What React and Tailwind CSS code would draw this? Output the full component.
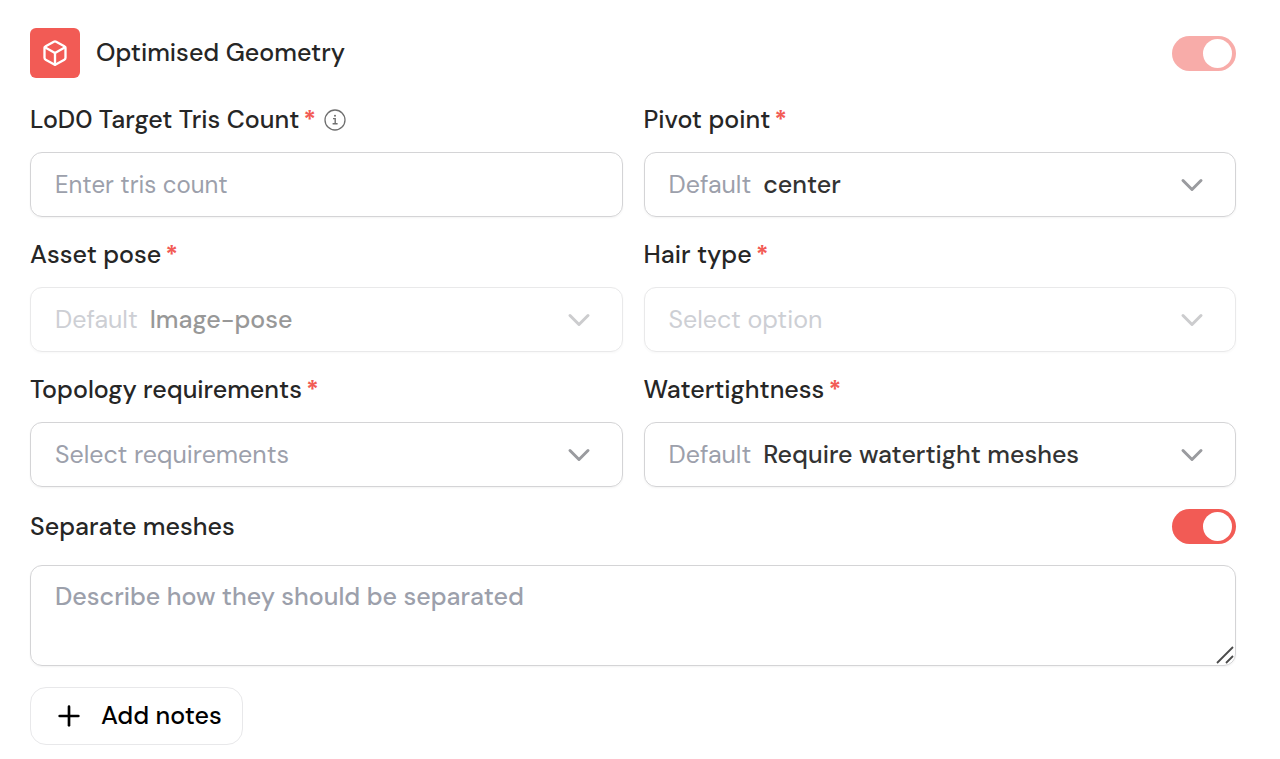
// Settings form for the optimised geometry step.
import { useState } from "react";
import { Box, ChevronDown, Plus } from "lucide-react";
import clsx from "clsx";

function InfoIcon() {
  return (
    <svg className="size-[22px] text-[#6f6f6f]" viewBox="0 0 22 22" fill="none" stroke="currentColor" aria-hidden="true">
      <circle cx="11" cy="11" r="10" strokeWidth="1.3" />
      <path d="M9 9.6h2.2v5M8.6 14.8h5" strokeWidth="1.4" />
      <circle cx="11" cy="6.8" r="1" fill="currentColor" stroke="none" />
    </svg>
  );
}

function Toggle({ id, label, defaultChecked, disabled }) {
  return (
    <input
      id={id}
      type="checkbox"
      role="switch"
      aria-label={label}
      defaultChecked={defaultChecked}
      disabled={disabled}
      className="flex h-[35px] w-16 shrink-0 appearance-none items-center rounded-full bg-gray-300 px-1 before:size-[29px] before:rounded-full before:bg-white checked:justify-end checked:bg-[#f25b55] disabled:opacity-50"
    />
  );
}

function Label({ htmlFor, children, info }) {
  return (
    <div className="flex h-8 items-center gap-2">
      <label htmlFor={htmlFor} className="flex gap-1 font-medium">
        {children}
        <span className="font-bold text-[#f25b55]">*</span>
      </label>
      {info && (
        <button type="button" aria-label="More information">
          <InfoIcon />
        </button>
      )}
    </div>
  );
}

function SelectField({ id, label, options, placeholder, disabled }) {
  const [value, setValue] = useState(placeholder ? "" : options[0]);

  return (
    <div className="flex flex-col gap-4">
      <Label htmlFor={id}>{label}</Label>
      <div
        className={clsx(
          "relative flex h-[65px] items-center gap-3 rounded-xl border border-[#d4d4d6] pl-6 shadow-xs",
          disabled && "opacity-50"
        )}
      >
        {!placeholder && <span className="text-[#9ca0ab]">Default</span>}
        <select
          id={id}
          value={value}
          onChange={(e) => setValue(e.target.value)}
          disabled={disabled}
          className={clsx(
            "h-full min-w-0 flex-1 appearance-none rounded-xl bg-transparent pr-16 opacity-100 outline-none",
            value ? "font-medium text-[#333333]" : "text-[#9ca0ab]"
          )}
        >
          {placeholder && <option value="">{placeholder}</option>}
          {options.map((o) => (
            <option key={o} value={o}>
              {o}
            </option>
          ))}
        </select>
        <ChevronDown className="pointer-events-none absolute right-[25px] size-9 text-[#9a9b9f]" strokeWidth={2} />
      </div>
    </div>
  );
}

export default function App() {
  return (
    <form className="bg-white pt-7 pr-11 pb-3.5 pl-[30px] font-['DM_Sans','Inter',sans-serif] text-[25px] leading-8 text-[#262626]">
      <div className="flex items-center gap-4">
        <div className="flex size-[50px] items-center justify-center rounded-md bg-[#f25b55]">
          <Box className="size-7 text-white" strokeWidth={2} />
        </div>
        <h2 className="flex-1 font-medium">Optimised Geometry</h2>
        <Toggle label="Optimised Geometry" defaultChecked disabled />
      </div>

      <div className="mt-[26px] grid grid-cols-2 gap-x-[21px] gap-y-[22px]">
        <div className="flex flex-col gap-4">
          <Label htmlFor="tris" info>
            LoD0 Target Tris Count
          </Label>
          <input
            id="tris"
            type="text"
            placeholder="Enter tris count"
            className="h-[65px] w-full rounded-xl border border-[#d4d4d6] px-6 text-2xl shadow-xs outline-none placeholder:text-[#9ca0ab]"
          />
        </div>
        <SelectField id="pivot" label="Pivot point" options={["center", "bottom"]} />
        <SelectField id="pose" label="Asset pose" options={["Image-pose", "A-pose", "T-pose"]} disabled />
        <SelectField id="hair" label="Hair type" placeholder="Select option" options={["Cards", "Mesh"]} disabled />
        <SelectField
          id="topology"
          label="Topology requirements"
          placeholder="Select requirements"
          options={["Quads", "Triangles"]}
        />
        <SelectField id="watertight" label="Watertightness" options={["Require watertight meshes", "Not required"]} />
      </div>

      <div className="mt-[22px] flex items-center justify-between">
        <label htmlFor="separate" className="font-medium">
          Separate meshes
        </label>
        <Toggle id="separate" label="Separate meshes" defaultChecked />
      </div>

      <div className="relative mt-[21px]">
        <textarea
          aria-label="Describe how they should be separated"
          placeholder="Describe how they should be separated"
          className="block h-[101px] w-full resize-none rounded-xl border border-[#d4d4d6] px-6 py-[15px] font-medium shadow-xs outline-none placeholder:text-[#9ca0ab]"
        />
        <svg
          className="pointer-events-none absolute right-0.5 bottom-0.5 size-[18px] text-[#4b4b4b]"
          viewBox="0 0 18 18"
          fill="none"
          stroke="currentColor"
          strokeWidth="1.8"
          aria-hidden="true"
        >
          <path d="M1 17 17 1M10 17l7-7" />
        </svg>
      </div>

      <button
        type="button"
        className="mt-[21px] flex h-[58px] items-center gap-4 rounded-2xl border border-[#e8e8ea] pr-5 pl-[22px] font-medium text-black"
      >
        <Plus className="size-8" strokeWidth={2} />
        Add notes
      </button>
    </form>
  );
}
